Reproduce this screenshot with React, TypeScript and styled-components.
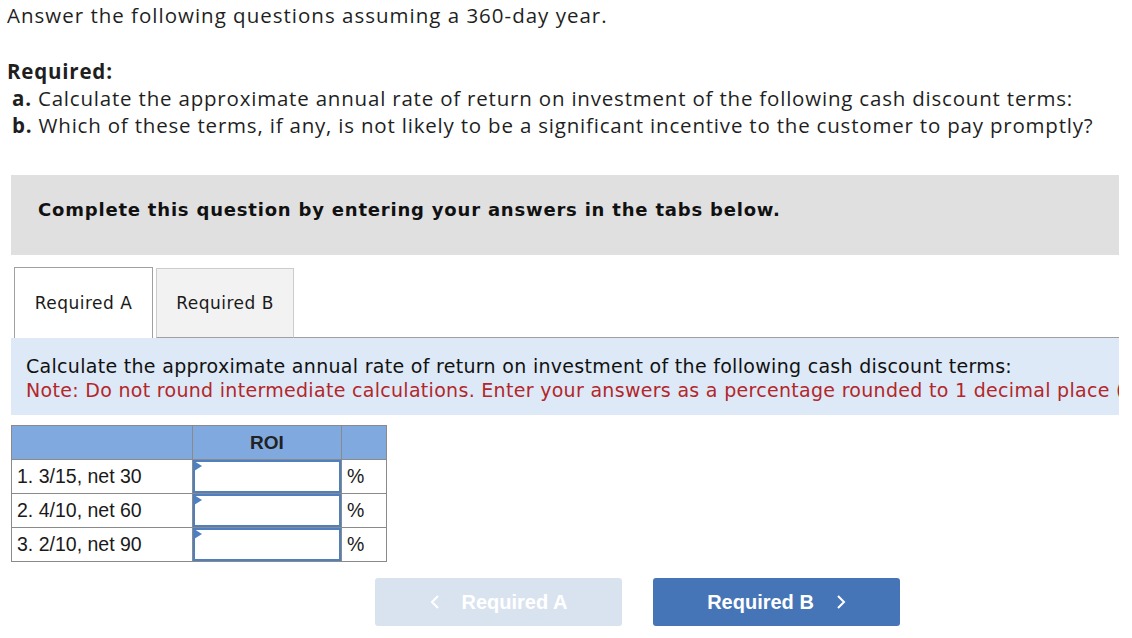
import styled, { createGlobalStyle } from 'styled-components';

const GlobalStyle = createGlobalStyle`
  html, body {
    margin: 0;
    padding: 0;
    background: #ffffff;
  }
  body {
    font-family: "Liberation Sans", Arial, sans-serif;
    color: #1a1a1a;
  }
`;

const rows = ['1. 3/15, net 30', '2. 4/10, net 60', '3. 2/10, net 90'];

export default function App() {
  return (
    <>
      <GlobalStyle />
      <PageStyled>
        <IntroStyled>Answer the following questions assuming a 360-day year.</IntroStyled>
        <RequiredStyled>
          <RequiredTitle>Required:</RequiredTitle>
          <RequiredItem>
            <b>a.</b> Calculate the approximate annual rate of return on investment of the following cash discount terms:
          </RequiredItem>
          <RequiredItem>
            <b>b.</b> Which of these terms, if any, is not likely to be a significant incentive to the customer to pay promptly?
          </RequiredItem>
        </RequiredStyled>

        <BannerStyled>Complete this question by entering your answers in the tabs below.</BannerStyled>

        <TabsRow>
          <Tab $active>Required A</Tab>
          <Tab>Required B</Tab>
          <TabFiller />
        </TabsRow>

        <InfoStyled>
          <InfoLine>Calculate the approximate annual rate of return on investment of the following cash discount terms:</InfoLine>
          <NoteLine>Note: Do not round intermediate calculations. Enter your answers as a percentage rounded to 1 decimal place (i.e., 32.1).</NoteLine>
        </InfoStyled>

        <TableStyled>
          <thead>
            <tr>
              <HeadCell $w={180} />
              <HeadCell $w={148}>ROI</HeadCell>
              <HeadCell $w={44} />
            </tr>
          </thead>
          <tbody>
            {rows.map((r) => (
              <tr key={r}>
                <LabelCell>{r}</LabelCell>
                <InputCell>
                  <InputBox>
                    <Flag />
                  </InputBox>
                </InputCell>
                <UnitCell>%</UnitCell>
              </tr>
            ))}
          </tbody>
        </TableStyled>

        <NavRow>
          <NavButton $disabled>
            <Chevron viewBox="0 0 10 16">
              <path d="M8 2 L2 8 L8 14" />
            </Chevron>
            Required A
          </NavButton>
          <NavButton>
            Required B
            <Chevron viewBox="0 0 10 16">
              <path d="M2 2 L8 8 L2 14" />
            </Chevron>
          </NavButton>
        </NavRow>
      </PageStyled>
    </>
  );
}

const PageStyled = styled.div`
  width: 1132px;
  height: 638px;
  overflow: hidden;
  box-sizing: border-box;
  padding: 2px 13px 0 11px;
`;

const IntroStyled = styled.div`
  font-family: "Open Sans", "Liberation Sans", sans-serif;
  font-size: 20.5px;
  letter-spacing: 1px;
  line-height: 26px;
  margin-left: -4px;
  color: #1f1f1f;
`;

const RequiredStyled = styled.div`
  margin-top: 30px;
  margin-left: -4px;
  font-family: "Open Sans", "Liberation Sans", sans-serif;
  font-size: 20.5px;
  letter-spacing: 0.8px;
  line-height: 27px;
  color: #1f1f1f;
`;

const RequiredTitle = styled.div`
  font-weight: bold;
`;

const RequiredItem = styled.div`
  padding-left: 5px;
  b {
    font-weight: bold;
  }
`;

const BannerStyled = styled.div`
  margin-top: 36px;
  height: 80px;
  box-sizing: border-box;
  background: #e0e0e0;
  display: flex;
  align-items: center;
  padding: 0 0 12px 27px;
  font-family: "DejaVu Sans", Verdana, sans-serif;
  font-weight: bold;
  font-size: 18px;
  letter-spacing: 0.8px;
  color: #111;
`;

const TabsRow = styled.div`
  margin-top: 12px;
  display: flex;
  align-items: flex-end;
  height: 71px;
  padding-left: 3px;
`;

const Tab = styled.div<{ $active?: boolean }>`
  box-sizing: border-box;
  height: ${(p) => (p.$active ? '71px' : '70px')};
  width: ${(p) => (p.$active ? '139px' : '138px')};
  margin-right: 3px;
  border: 1px solid ${(p) => (p.$active ? '#a0a0a0' : '#cccccc')};
  border-bottom: ${(p) => (p.$active ? 'none' : '1px solid #a0a0a0')};
  background: ${(p) => (p.$active ? '#ffffff' : '#f2f2f2')};
  display: flex;
  align-items: center;
  justify-content: center;
  font-family: "DejaVu Sans", Verdana, sans-serif;
  font-size: 17px;
  letter-spacing: 0.5px;
  color: #1a1a1a;
`;

const TabFiller = styled.div`
  flex: 1;
  border-bottom: 1px solid #a0a0a0;
  margin-left: -3px;
`;

const InfoStyled = styled.div`
  background: #dde9f6;
  height: 77px;
  box-sizing: border-box;
  padding: 16px 0 0 15px;
  overflow: hidden;
  white-space: nowrap;
  font-family: "DejaVu Sans", Verdana, sans-serif;
  font-size: 19px;
  letter-spacing: 0.3px;
  line-height: 24px;
`;

const InfoLine = styled.div`
  color: #111;
`;

const NoteLine = styled.div`
  color: #b3262a;
`;

const TableStyled = styled.table`
  margin-top: 10px;
  border-collapse: collapse;
  font-family: "Liberation Sans", Arial, sans-serif;
  font-size: 19.5px;
  color: #1a1a1a;

  td, th {
    border: 1px solid #8a8a8a;
    padding: 0;
  }
`;

const HeadCell = styled.th<{ $w: number }>`
  width: ${(p) => p.$w}px;
  height: 33px;
  background: #80aadf;
  font-weight: bold;
  font-size: 19px;
  text-align: center;
  color: #222;
`;

const LabelCell = styled.td`
  height: 33px;
  padding-left: 5px !important;
  text-align: left;
`;

const InputCell = styled.td`
  height: 33px;
`;

const InputBox = styled.div`
  position: relative;
  box-sizing: border-box;
  height: 33px;
  width: 100%;
  border: 2px solid #4f7fbe;
  background: #ffffff;
`;

const Flag = styled.span`
  position: absolute;
  left: -1px;
  top: -1px;
  width: 0;
  height: 0;
  border-top: 5px solid transparent;
  border-bottom: 5px solid transparent;
  border-left: 8px solid #4f7fbe;
`;

const UnitCell = styled.td`
  padding-left: 5px !important;
`;

const NavRow = styled.div`
  margin-top: 16px;
  display: flex;
  gap: 31px;
  padding-left: 364px;
`;

const NavButton = styled.div<{ $disabled?: boolean }>`
  width: 247px;
  height: 48px;
  border-radius: 3px;
  background: ${(p) => (p.$disabled ? '#d9e3ef' : '#4675b7')};
  color: #ffffff;
  display: flex;
  align-items: center;
  justify-content: center;
  gap: 22px;
  font-family: "Liberation Sans", Arial, sans-serif;
  font-weight: bold;
  font-size: 20px;
`;

const Chevron = styled.svg`
  width: 10px;
  height: 16px;
  fill: none;
  stroke: #ffffff;
  stroke-width: 2;
`;
